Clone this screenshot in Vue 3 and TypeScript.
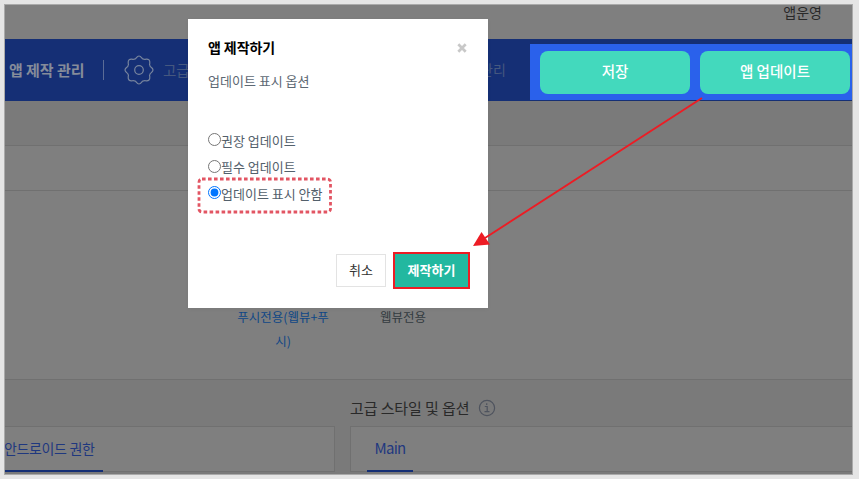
<script setup lang="ts">
import { ref } from 'vue'

interface UpdateOption {
  value: string
  label: string
}

const options: UpdateOption[] = [
  { value: 'recommended', label: '권장 업데이트' },
  { value: 'required', label: '필수 업데이트' },
  { value: 'hidden', label: '업데이트 표시 안함' },
]
const selected = ref<string>('hidden')
</script>

<template>
  <div class="stage">
    <div class="page">
      <header class="top"><span>앱운영</span></header>
      <nav class="bar">
        <strong class="bar-title">앱 제작 관리</strong>
        <i class="divider"></i>
        <svg class="gear" viewBox="0 0 30 30" fill="none" stroke="currentColor" stroke-width="1.2" stroke-linejoin="round">
          <path d="M10.5 4.1Q11.8 4 12.3 2.8Q15 -.8 17.7 2.8Q18.2 4 19.5 4.1Q20.5 4.8 21.8 4.2Q26.2 3.7 25.8 8.2Q25.2 9.5 25.9 10.5Q26 11.8 27.2 12.3Q30.8 15 27.2 17.7Q26 18.2 25.9 19.5Q25.2 20.5 25.8 21.8Q26.2 26.2 21.8 25.8Q20.5 25.2 19.5 25.9Q18.2 26 17.7 27.2Q15 30.8 12.3 27.2Q11.8 26 10.5 25.9Q9.5 25.2 8.2 25.8Q3.8 26.2 4.2 21.8Q4.8 20.5 4.1 19.5Q4 18.2 2.8 17.7Q-.8 15 2.8 12.3Q4 11.8 4.1 10.5Q4.8 9.5 4.2 8.2Q3.8 3.7 8.2 4.2Q9.5 4.8 10.5 4.1Z" />
          <circle cx="15" cy="15" r="4.3" />
        </svg>
        <span class="bar-sub">고급</span>
        <span class="bar-end">관리</span>
        <div class="actions">
          <button>저장</button>
          <button>앱 업데이트</button>
        </div>
      </nav>
      <div class="band"></div>
      <div class="row"></div>
      <main class="types">
        <span class="type active">푸시전용(웹뷰+푸<br />시)</span>
        <span class="type">웹뷰전용</span>
      </main>
      <section class="panels">
        <div class="column left">
          <div class="heading"></div>
          <div class="panel"><span class="tab"><b>안드로이드 권한</b></span></div>
        </div>
        <div class="column right">
          <div class="heading">
            <span>고급 스타일 및 옵션</span>
            <svg viewBox="0 0 18 18" fill="none" stroke="currentColor" stroke-width="1.2">
              <circle cx="9" cy="9" r="7.6" />
              <path d="M6.8 7.5h2.4v5M6.5 12.7h5M8.7 4.2v1.7" />
            </svg>
          </div>
          <div class="panel"><span class="tab main-tab"><b>Main</b></span></div>
        </div>
      </section>
    </div>

    <div class="modal" role="dialog">
      <div class="modal-head">
        <strong>앱 제작하기</strong>
        <svg viewBox="0 0 10 10"><path d="M1.3 1.3l7.4 7.4M8.7 1.3L1.3 8.7" stroke="#c8c8c8" stroke-width="2.7" /></svg>
      </div>
      <p>업데이트 표시 옵션</p>
      <div class="options">
        <label v-for="option in options" :key="option.value">
          <input v-model="selected" type="radio" name="update" :value="option.value" />
          <span>{{ option.label }}</span>
        </label>
      </div>
      <div class="buttons">
        <button class="cancel">취소</button>
        <button class="create">제작하기</button>
      </div>
    </div>

    <svg class="marks" viewBox="0 0 859 479" fill="none">
      <rect x="199" y="179" width="131.5" height="33" rx="3" stroke="#e25563" stroke-width="2.8" stroke-dasharray="3.6 2.4" />
      <path d="M702 98L485 238" stroke="#ed1c24" stroke-width="1.9" />
      <path d="M473 246L481.5 232L490 244.5Z" fill="#ed1c24" />
    </svg>
  </div>
</template>

<style>
body {
  overflow: hidden;
}
</style>

<style scoped>
* {
  box-sizing: border-box;
}
.stage {
  position: relative;
  width: 859px;
  height: 479px;
  padding: 4px 6px 4px 4px;
  background: #e5e5e5;
  font-family: "Noto Sans CJK KR", sans-serif;
  font-size: 13px;
}
button {
  font-family: inherit;
  padding: 0;
}
.page {
  width: 849px;
  height: 471px;
  border: 1px solid #aaa;
  background: #7f7f7f;
  overflow: hidden;
}
.top {
  height: 34px;
  padding: 0 30px;
  text-align: right;
  font-size: 14px;
  line-height: 15px;
  color: #292929;
}
.bar {
  height: 62px;
  display: flex;
  align-items: center;
  background: #152f75;
  color: #78859e;
}
.bar-title {
  width: 98px;
  padding: 0 0 2px 4px;
  font-size: 15px;
  font-weight: 700;
  letter-spacing: -0.05px;
  color: #858c9a;
  white-space: nowrap;
}
.divider {
  width: 1px;
  height: 20px;
  background: #5b6c96;
}
.gear {
  width: 30px;
  height: 30px;
  margin-left: 20px;
}
.bar-sub {
  margin-left: 9px;
  padding-bottom: 2px;
  font-size: 14.5px;
  color: #46587f;
}
.bar-end {
  width: 26px;
  margin-left: auto;
  margin-right: 24px;
  padding-bottom: 2px;
  color: #46587f;
  font-size: 14px;
}
.actions {
  width: 322px;
  height: 56px;
  margin-top: 4px;
  padding: 7px 2px 6px 10px;
  display: flex;
  gap: 10px;
  background: #2a61eb;
}
.actions button {
  flex: 1;
  padding-bottom: 4px;
  border: 0;
  border-radius: 8px;
  background: #43d9bd;
  color: #fff;
  font-size: 14.5px;
  font-weight: 500;
}
.band {
  height: 45px;
  background: #7a7a7a;
  border-bottom: 1px solid #707070;
}
.row {
  height: 45px;
  border-bottom: 1px solid #707070;
}
.types {
  height: 189px;
  padding: 114px 0 0 225px;
  display: flex;
  gap: 14px;
  line-height: 24px;
  border-bottom: 1px solid #707070;
}
.type {
  width: 106px;
  text-align: center;
  font-size: 12.5px;
  color: #333b40;
}
.type.active {
  color: #0f4786;
}
.panels {
  height: 96px;
  display: flex;
  gap: 15px;
  background: #7a7a7a;
}
.left {
  width: 330px;
}
.right {
  flex: 1;
}
.heading {
  height: 46px;
  padding-top: 10px;
  display: flex;
  gap: 9px;
  align-items: center;
  font-size: 15px;
  letter-spacing: -0.1px;
  color: #292929;
}
.heading span {
  padding-bottom: 1px;
}
.heading svg {
  width: 18px;
  height: 18px;
  color: #4e535e;
}
.panel {
  height: 46px;
  border: 1px solid #707070;
  background: #7f7f7f;
}
.left .panel {
  border-left: 0;
}
.right .panel {
  border-right: 0;
  padding-left: 16px;
}
.tab {
  display: block;
  width: 98px;
  height: 45px;
  line-height: 42px;
  border-bottom: 2px solid #152f75;
  color: #1f387f;
  font-size: 14px;
  letter-spacing: -0.35px;
  text-indent: -1px;
  white-space: nowrap;
}
.tab b {
  font-weight: 400;
}
.main-tab {
  width: 46px;
  text-align: center;
  text-indent: 0;
  font-size: 15px;
  letter-spacing: -0.7px;
}
.modal {
  position: absolute;
  left: 188px;
  top: 19px;
  width: 300px;
  height: 289px;
  padding: 19px 18px 19px 20px;
  background: #fff;
  box-shadow: 0 1px 4px #0000000d;
}
.modal-head {
  height: 20px;
  display: flex;
  justify-content: space-between;
  align-items: center;
  padding-right: 3px;
  font-size: 14px;
}
.modal-head strong {
  padding-bottom: 3px;
  letter-spacing: -0.1px;
}
.modal-head svg {
  width: 10px;
  height: 10px;
}
.modal p {
  margin: 13px 0 0;
  line-height: 20px;
  color: #5d6873;
}
.options {
  margin-top: 37px;
  display: flex;
  flex-direction: column;
}
label {
  height: 26.5px;
  display: flex;
  align-items: center;
  color: #53606b;
}
label span {
  padding-bottom: 2px;
}
input {
  width: 13px;
  height: 13px;
  margin: 0 0 3px;
}
.buttons {
  margin-top: 44px;
  display: flex;
  justify-content: flex-end;
  align-items: center;
  gap: 7px;
}
.cancel {
  width: 50px;
  height: 33px;
  padding-bottom: 2px;
  border: 1px solid #e3e3e3;
  background: #fff;
  color: #333;
  font-size: 13px;
}
.create {
  width: 77px;
  height: 37px;
  padding-bottom: 2px;
  border: 2px solid #ed1c24;
  background: #22b8a0;
  color: #fff;
  font-size: 13px;
  font-weight: 700;
}
.marks {
  position: absolute;
  inset: 0;
  width: 859px;
  height: 479px;
  pointer-events: none;
}
</style>
